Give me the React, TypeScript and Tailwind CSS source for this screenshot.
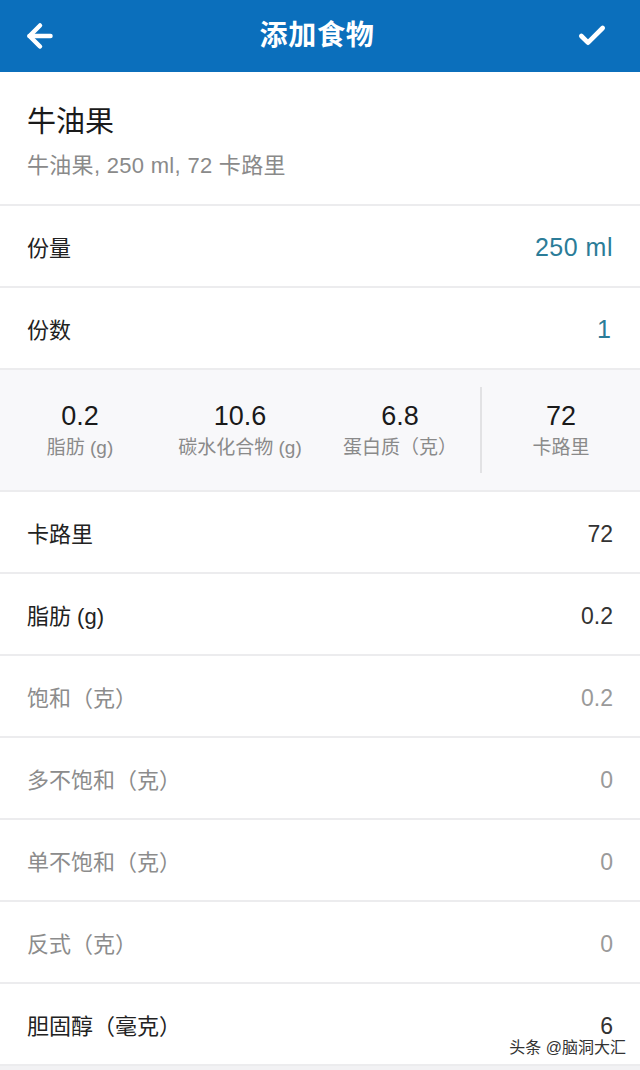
import { ArrowLeft, Check } from 'lucide-react';

const font = { fontFamily: '"Liberation Sans", "Noto Sans CJK SC", sans-serif' };

type Row = { label: string; value: string; muted?: boolean };

const nutrients: Row[] = [
  { label: '卡路里', value: '72' },
  { label: '脂肪 (g)', value: '0.2' },
  { label: '饱和（克）', value: '0.2', muted: true },
  { label: '多不饱和（克）', value: '0', muted: true },
  { label: '单不饱和（克）', value: '0', muted: true },
  { label: '反式（克）', value: '0', muted: true },
  { label: '胆固醇（毫克）', value: '6' },
];

const macros = [
  { value: '0.2', label: '脂肪 (g)' },
  { value: '10.6', label: '碳水化合物 (g)' },
  { value: '6.8', label: '蛋白质（克）' },
];

const App = () => {
  return (
    <div className="relative w-[640px] h-[1070px] overflow-hidden bg-[#f2f2f4]" style={font}>
      {/* Header */}
      <div className="h-[72px] bg-[#0b6fbc] flex items-center justify-between pl-[22px] pr-[32px]">
        <ArrowLeft className="w-[36px] h-[36px] text-white" strokeWidth={3} />
        <h1 className="text-white text-[28px] font-bold tracking-wide">添加食物</h1>
        <Check className="w-[32px] h-[32px] text-white" strokeWidth={3.5} />
      </div>

      {/* Food title */}
      <div className="h-[134px] bg-white px-[27px] pt-[8px] flex flex-col justify-center border-b-2 border-[#ececee]">
        <div className="text-[29px] text-[#1a1a1a] leading-none mb-[18px]">牛油果</div>
        <div className="text-[22px] text-[#8a8a8a] leading-none tracking-[0.3px]">牛油果, 250 ml, 72 卡路里</div>
      </div>

      {/* Serving */}
      <div className="h-[82px] bg-white px-[27px] pt-[4px] flex items-center justify-between border-b-2 border-[#ececee]">
        <span className="text-[22px] text-[#222]">份量</span>
        <span className="text-[25px] text-[#2b7c98] tracking-[0.5px]">250 ml</span>
      </div>
      <div className="h-[82px] bg-white px-[27px] pt-[4px] flex items-center justify-between border-b-2 border-[#ececee]">
        <span className="text-[22px] text-[#222]">份数</span>
        <span className="text-[25px] text-[#2b7c98] pr-[2px]">1</span>
      </div>

      {/* Macros */}
      <div className="h-[122px] bg-[#f8f8fa] grid grid-cols-4 items-center border-b-2 border-[#ececee]">
        {macros.map((m) => (
          <div key={m.label} className="flex flex-col items-center">
            <span className="text-[27px] text-[#1a1a1a] leading-none">{m.value}</span>
            <span className="text-[19px] text-[#8a8a8a] leading-none mt-[8px]">{m.label}</span>
          </div>
        ))}
        <div className="flex flex-col items-center border-l-2 border-[#e2e2e4] py-[16px]">
          <span className="text-[27px] text-[#1a1a1a] leading-none">72</span>
          <span className="text-[19px] text-[#8a8a8a] leading-none mt-[8px]">卡路里</span>
        </div>
      </div>

      {/* Nutrient rows */}
      {nutrients.map((r) => (
        <div
          key={r.label}
          className="h-[82px] bg-white px-[27px] pt-[4px] flex items-center justify-between border-b-2 border-[#ececee]"
        >
          <span className={r.muted ? 'text-[22px] text-[#8c8c8c]' : 'text-[22px] text-[#222]'}>{r.label}</span>
          <span className={r.muted ? 'text-[23px] text-[#9a9a9a]' : 'text-[23px] text-[#333]'}>{r.value}</span>
        </div>
      ))}

      {/* Watermark */}
      <div className="absolute right-[12px] bottom-[10px] text-[16px] text-[#333] bg-white/70 px-[2px]">
        头条 @脑洞大汇
      </div>
    </div>
  );
};

export default App;
